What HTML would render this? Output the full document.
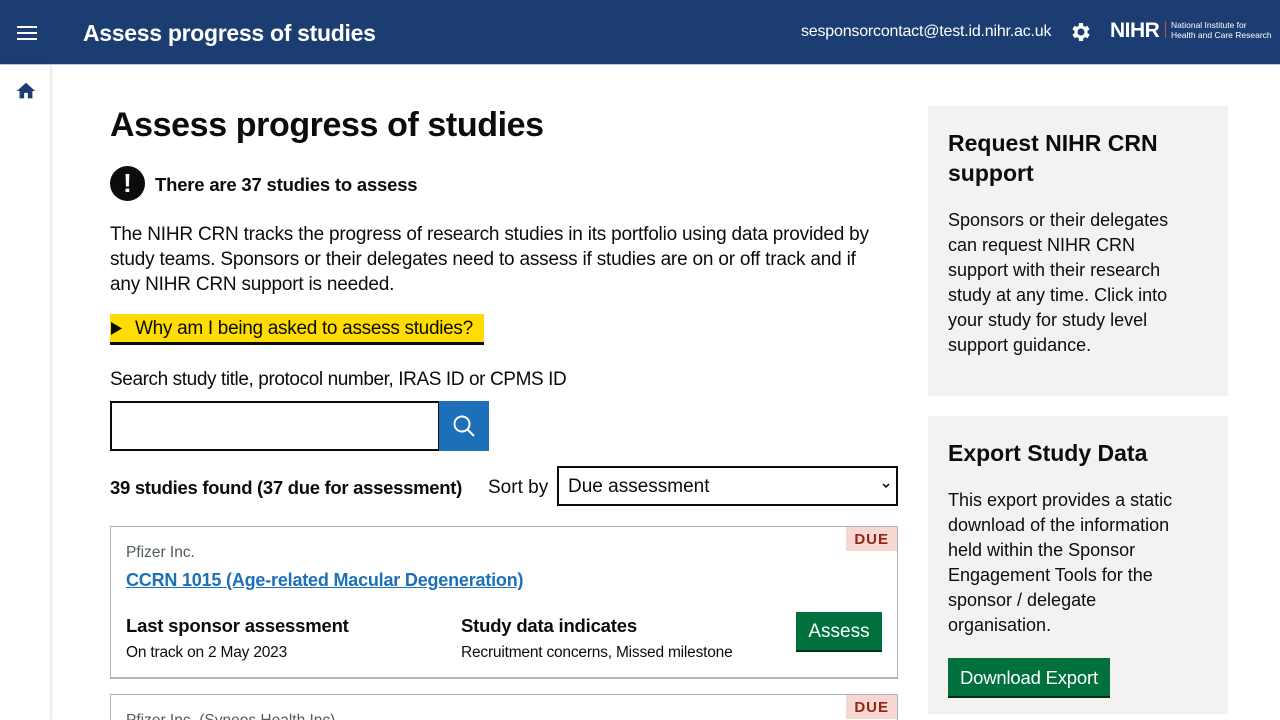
<!DOCTYPE html>
<html><head><meta charset="utf-8"><style>
*{box-sizing:border-box;margin:0;padding:0}
html,body{width:1280px;height:720px;overflow:hidden}
body{font-family:"Liberation Sans",Arial,sans-serif;color:#0b0c0c;background:#fff;position:relative}
.hdr{position:absolute;left:0;top:0;width:1280px;height:65px;background:#1b3d72;border-bottom:1px solid #b8cbe0;color:#fff}
.side{position:absolute;left:0;top:65px;width:51px;height:655px;border-right:1px solid #e6e6e6;box-shadow:1px 0 3px rgba(0,0,0,.08)}
.abs{position:absolute;white-space:nowrap}
.panel{position:absolute;background:#f3f2f1;left:928px;width:300px;padding:20px;overflow:hidden}
.panel h2{font-size:23px;font-weight:bold;line-height:30px;margin-bottom:20px;margin-top:2px}
.panel p{font-size:18px;line-height:25px;width:245px}
.card{position:absolute;left:110px;width:788px;border:1px solid #b1b4b6;border-bottom:2px solid #b1b4b6}
.due{position:absolute;right:0;top:0;background:#f6d7d2;color:#942514;font-weight:bold;font-size:15px;letter-spacing:1px;padding:4px 8px 3px}
</style></head><body>
<div class="hdr">
 <svg class="abs" style="left:17px;top:25px" width="20" height="16"><rect y="1" width="20" height="2" fill="#fff"/><rect y="7" width="20" height="2" fill="#fff"/><rect y="13" width="20" height="2" fill="#fff"/></svg>
 <div class="abs" style="left:83px;top:20px;font-size:23px;font-weight:bold;letter-spacing:-0.3px">Assess progress of studies</div>
 <div class="abs" style="left:801px;top:23px;font-size:16px;letter-spacing:-0.2px">sesponsorcontact@test.id.nihr.ac.uk</div>
 <svg class="abs" style="left:1069px;top:20px" width="24" height="24" viewBox="0 0 24 24"><path fill="#fff" d="M19.4 13a7.5 7.5 0 000-2l2.1-1.6-2-3.5-2.5 1a7 7 0 00-1.7-1L15 3h-4l-.4 2.9a7 7 0 00-1.7 1l-2.5-1-2 3.5L6.6 11a7.5 7.5 0 000 2l-2.1 1.6 2 3.5 2.5-1a7 7 0 001.7 1L11 21h4l.4-2.9a7 7 0 001.7-1l2.5 1 2-3.5zM13 15.5a3.5 3.5 0 110-7 3.5 3.5 0 010 7z" transform="translate(-1 0)"/></svg>
 <div class="abs" style="left:1110px;top:19px;font-size:21px;font-weight:bold;letter-spacing:-0.5px">NIHR</div>
 <div class="abs" style="left:1165px;top:21px;width:1px;height:17px;background:#c05050"></div>
 <div class="abs" style="left:1171px;top:20px;font-size:8.5px;line-height:10px">National Institute for<br>Health and Care Research</div>
</div>
<div class="side"><svg class="abs" style="left:15px;top:15px" width="22" height="22" viewBox="0 0 24 24"><path fill="#1b3d72" d="M10 20v-6h4v6h5v-8h3L12 3 2 12h3v8z"/></svg></div>

<div class="abs" style="left:110px;top:106px;font-size:34px;font-weight:bold;letter-spacing:-0.4px">Assess progress of studies</div>
<div class="abs" style="left:110px;top:166px;width:35px;height:35px;border-radius:50%;background:#0b0c0c;color:#fff;font-weight:bold;font-size:26px;text-align:center;line-height:35px">!</div>
<div class="abs" style="left:155px;top:174px;font-size:18.5px;font-weight:bold;letter-spacing:-0.2px">There are 37 studies to assess</div>
<div class="abs" style="left:110px;top:222px;width:778px;white-space:normal;font-size:19px;line-height:25px;letter-spacing:-0.2px">The NIHR CRN tracks the progress of research studies in its portfolio using data provided by study teams. Sponsors or their delegates need to assess if studies are on or off track and if any NIHR CRN support is needed.</div>
<div class="abs" style="left:110px;top:314px;height:31px;width:374px;background:#fd0;border-bottom:3px solid #0b0c0c;font-size:19px;line-height:29px;padding-left:25px;letter-spacing:-0.3px">Why am I being asked to assess studies?</div>
<svg class="abs" style="left:111px;top:322px" width="11" height="13"><path d="M0 0L11 6.5 0 13z" fill="#0b0c0c"/></svg>
<div class="abs" style="left:110px;top:369px;font-size:19px;letter-spacing:-0.4px">Search study title, protocol number, IRAS ID or CPMS ID</div>
<div class="abs" style="left:110px;top:401px;width:330px;height:50px;border:2px solid #0b0c0c"></div>
<div class="abs" style="left:439px;top:401px;width:50px;height:50px;background:#1d70b8"><svg style="position:absolute;left:13px;top:13px" width="24" height="24" viewBox="0 0 24 24"><circle cx="10" cy="10" r="7.5" fill="none" stroke="#fff" stroke-width="2"/><path d="M15.5 15.5L22 22" stroke="#fff" stroke-width="2"/></svg></div>
<div class="abs" style="left:110px;top:477px;font-size:18.5px;font-weight:bold;letter-spacing:-0.3px">39 studies found (37 due for assessment)</div>
<div class="abs" style="left:488px;top:477px;font-size:19px">Sort by</div>
<div class="abs" style="left:557px;top:466px;width:341px;height:40px;border:2px solid #0b0c0c;font-size:19px;line-height:38px;padding-left:9px">Due assessment<svg style="position:absolute;right:6px;top:15px" width="8" height="6"><path d="M1 1l3 3 3-3" stroke="#000" stroke-width="1.5" fill="none"/></svg></div>

<div class="card" style="top:526px;height:153px">
 <div class="due">DUE</div>
 <div class="abs" style="left:15px;top:17px;font-size:15.5px;color:#505a5f">Pfizer Inc.</div>
 <div class="abs" style="left:15px;top:43px;font-size:18px;font-weight:bold;color:#1d70b8;text-decoration:underline;letter-spacing:-0.2px">CCRN 1015 (Age-related Macular Degeneration)</div>
 <div class="abs" style="left:15px;top:88px;font-size:18.5px;font-weight:bold;letter-spacing:-0.2px">Last sponsor assessment</div>
 <div class="abs" style="left:15px;top:117px;font-size:15.5px;letter-spacing:-0.2px">On track on 2 May 2023</div>
 <div class="abs" style="left:350px;top:88px;font-size:18.5px;font-weight:bold;letter-spacing:-0.2px">Study data indicates</div>
 <div class="abs" style="left:350px;top:117px;font-size:15.5px;letter-spacing:-0.2px">Recruitment concerns, Missed milestone</div>
 <div class="abs" style="left:685px;top:85px;width:86px;height:40px;background:#00703c;border-bottom:2px solid #002d18;color:#fff;font-size:19px;text-align:center;line-height:40px">Assess</div>
</div>
<div class="card" style="top:694px;height:60px">
 <div class="due">DUE</div>
 <div class="abs" style="left:15px;top:17px;font-size:15.5px;color:#505a5f">Pfizer Inc. (Syneos Health Inc)</div>
</div>

<div class="panel" style="top:106px;height:290px"><h2>Request NIHR CRN support</h2><p style="width:238px">Sponsors or their delegates can request NIHR CRN support with their research study at any time. Click into your study for study level support guidance.</p></div>
<div class="panel" style="top:416px;height:298px"><h2>Export Study Data</h2><p style="width:245px">This export provides a static download of the information held within the Sponsor Engagement Tools for the sponsor / delegate organisation.</p>
<div style="margin-top:20px;display:inline-block;background:#00703c;border-bottom:2px solid #002d18;color:#fff;font-size:18.5px;padding:0 12px;height:40px;line-height:40px;letter-spacing:-0.2px">Download Export</div></div>
</body></html>
